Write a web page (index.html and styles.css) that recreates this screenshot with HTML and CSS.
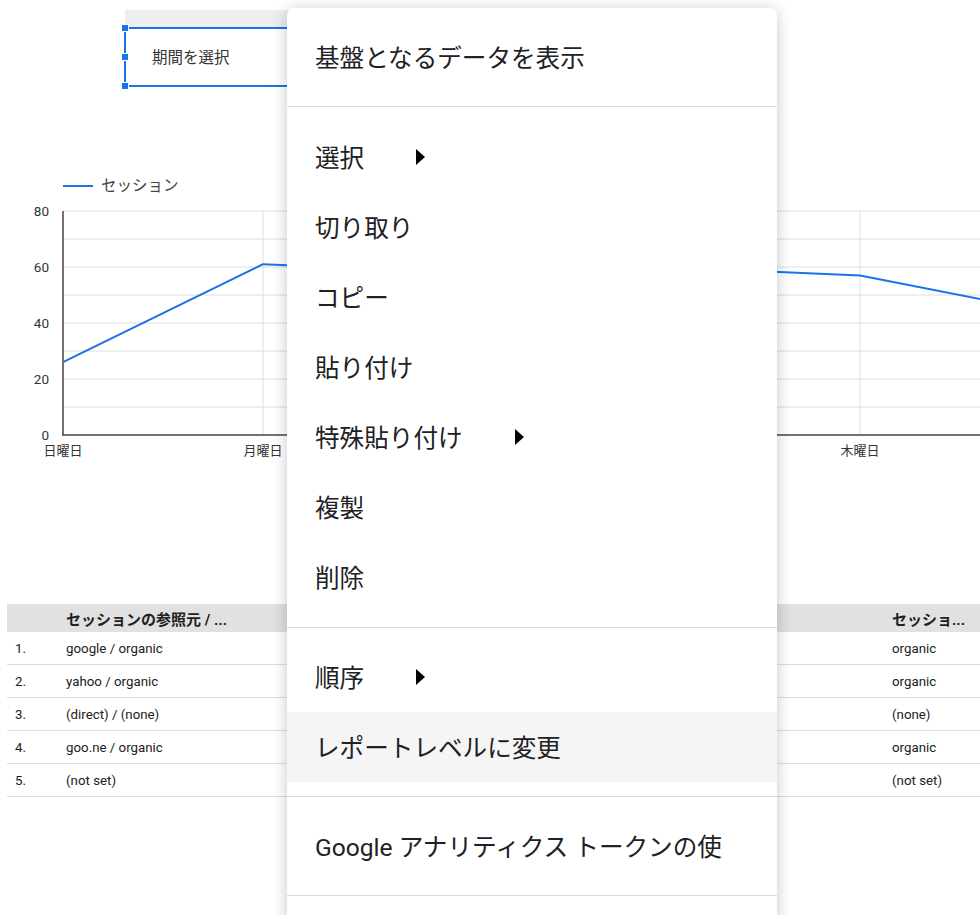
FILE: index.html
```html
<!DOCTYPE html>
<html lang="ja">
<head>
    <meta charset="UTF-8">
    <meta name="viewport" content="width=device-width, initial-scale=1.0">
    <title>レポート</title>
    <link rel="stylesheet" href="styles.css">
</head>
<body>
    <div class="canvas">
        <div class="date-control">
            <div class="date-strip"></div>
            <div class="date-box">
                <span class="handle handle-top"></span>
                <span class="handle handle-mid"></span>
                <span class="handle handle-bottom"></span>
                <span class="date-label">期間を選択</span>
            </div>
        </div>

        <svg class="chart" width="980" height="290" viewBox="0 0 980 290">
            <line class="legend-line" x1="63" y1="16" x2="93" y2="16"/>
            <text class="legend" x="101" y="21">セッション</text>
            <g class="grid">
                <line x1="63" y1="41" x2="980" y2="41"/>
                <line x1="63" y1="69" x2="980" y2="69"/>
                <line x1="63" y1="97" x2="980" y2="97"/>
                <line x1="63" y1="125" x2="980" y2="125"/>
                <line x1="63" y1="153" x2="980" y2="153"/>
                <line x1="63" y1="181" x2="980" y2="181"/>
                <line x1="63" y1="209" x2="980" y2="209"/>
                <line x1="63" y1="237" x2="980" y2="237"/>
                <line x1="263" y1="41" x2="263" y2="265"/>
                <line x1="462" y1="41" x2="462" y2="265"/>
                <line x1="661" y1="41" x2="661" y2="265"/>
                <line x1="860" y1="41" x2="860" y2="265"/>
            </g>
            <g class="axis">
                <line x1="63" y1="41" x2="63" y2="265"/>
                <line x1="62" y1="265" x2="980" y2="265"/>
            </g>
            <g class="ylabels">
                <text x="49" y="45.5">80</text>
                <text x="49" y="101.5">60</text>
                <text x="49" y="157.5">40</text>
                <text x="49" y="213.5">20</text>
                <text x="49" y="269.5">0</text>
            </g>
            <g class="xlabels">
                <text x="63" y="284.5">日曜日</text>
                <text x="263" y="284.5">月曜日</text>
                <text x="860" y="284.5">木曜日</text>
            </g>
            <polyline class="series" points="63,192.2 263,94.2 462,102.6 661,97 860,105.4 1059,144.6"/>
        </svg>

        <div class="table">
            <div class="row head">
                <span></span>
                <span>セッションの参照元 / ...</span>
                <span>セッショ...</span>
            </div>
            <div class="row">
                <span class="num">1.</span>
                <span>google / organic</span>
                <span>organic</span>
            </div>
            <div class="row">
                <span class="num">2.</span>
                <span>yahoo / organic</span>
                <span>organic</span>
            </div>
            <div class="row">
                <span class="num">3.</span>
                <span>(direct) / (none)</span>
                <span>(none)</span>
            </div>
            <div class="row">
                <span class="num">4.</span>
                <span>goo.ne / organic</span>
                <span>organic</span>
            </div>
            <div class="row">
                <span class="num">5.</span>
                <span>(not set)</span>
                <span>(not set)</span>
            </div>
        </div>

        <div class="menu">
            <div class="group first">
                <div class="item">基盤となるデータを表示</div>
            </div>
            <div class="group edit">
                <div class="item">選択<span class="arrow"></span></div>
                <div class="item">切り取り</div>
                <div class="item">コピー</div>
                <div class="item">貼り付け</div>
                <div class="item">特殊貼り付け<span class="arrow"></span></div>
                <div class="item">複製</div>
                <div class="item">削除</div>
            </div>
            <div class="group">
                <div class="item">順序<span class="arrow"></span></div>
                <div class="item active">レポートレベルに変更</div>
            </div>
            <div class="group">
                <div class="item">Google アナリティクス トークンの使</div>
            </div>
            <div class="group empty"></div>
        </div>
    </div>
</body>
</html>
```

FILE: styles.css
```css
body {
    margin: 0;
    padding: 0;
    background: #fff;
    font-family: Roboto, "Noto Sans CJK JP", sans-serif;
    color: #212121;
}
.canvas {
    position: relative;
    height: 915px;
    overflow: hidden;
    padding-top: 10px;
    box-sizing: border-box;
}

/* date range control */
.date-control {
    margin-left: 124px;
    width: 400px;
}
.date-strip {
    height: 17px;
    margin-left: 1px;
    background: #eeeeee;
}
.date-box {
    position: relative;
    height: 53px;
    border: 2px solid #1a73e8;
    display: flex;
    align-items: center;
    padding-left: 26px;
    padding-bottom: 3px;
}
.date-label {
    font-size: 15.5px;
    color: #333;
}
.handle {
    position: absolute;
    left: -5px;
    width: 8px;
    height: 8px;
    background: #1a73e8;
    border: 1px solid #fff;
    box-sizing: border-box;
}
.handle-top { top: -5px; }
.handle-mid { top: 24px; }
.handle-bottom { bottom: -5px; }

/* time series */
.chart {
    display: block;
    margin-top: 83px;
}
.legend-line {
    stroke: #1a73e8;
    stroke-width: 2;
}
.legend {
    font-size: 15.5px;
    fill: #444;
}
.grid line {
    stroke: #dedede;
    stroke-width: 1;
}
.axis line {
    stroke: #444;
    stroke-width: 1.5;
}
.ylabels text {
    font-size: 13.5px;
    fill: #333;
    text-anchor: end;
}
.xlabels text {
    font-size: 13px;
    fill: #333;
    text-anchor: middle;
}
.series {
    fill: none;
    stroke: #1a73e8;
    stroke-width: 2;
    stroke-linejoin: round;
}

/* table */
.table {
    margin: 144px 0 0 7px;
    font-size: 13.3px;
}
.row {
    display: grid;
    grid-template-columns: 59px 826px 88px;
    align-items: center;
    height: 33px;
    border-bottom: 1px solid #dddddd;
    box-sizing: border-box;
    white-space: nowrap;
}
.row.head {
    height: 28px;
    background: #e1e1e1;
    border-bottom: none;
    font-size: 15px;
    font-weight: bold;
}
.num {
    padding-left: 8px;
}

/* context menu */
.menu {
    position: absolute;
    top: 8px;
    left: 287px;
    width: 490px;
    background: #fff;
    border-radius: 8px;
    box-shadow: 0 2px 16px rgba(0, 0, 0, 0.22);
    color: #202124;
}
.group {
    padding: 14px 0;
    border-top: 1px solid #dcdcdc;
}
.group.first {
    border-top: none;
}
.group.edit {
    padding: 15px 0;
}
.group.empty {
    height: 60px;
}
.item {
    height: 70px;
    display: flex;
    align-items: center;
    padding-left: 28px;
    padding-bottom: 3px;
    box-sizing: border-box;
    font-size: 24.6px;
    white-space: nowrap;
}
.item.active {
    background: #f5f5f5;
}
.arrow {
    width: 0;
    height: 0;
    margin-left: 52px;
    margin-top: 3px;
    border-left: 9px solid #000;
    border-top: 8px solid transparent;
    border-bottom: 8px solid transparent;
}
```
